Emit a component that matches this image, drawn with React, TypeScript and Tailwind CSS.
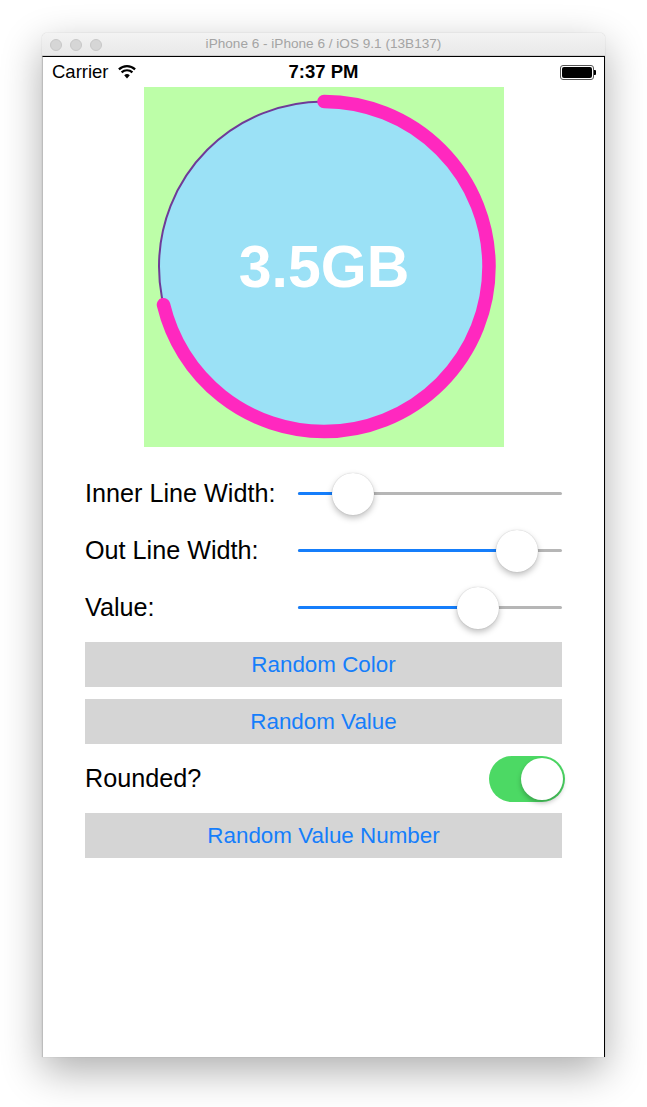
import React from "react";

const font = { fontFamily: '"Liberation Sans", Arial, sans-serif' };

function Slider({ pos }: { pos: number }) {
  return (
    <div className="relative h-full flex-1 flex items-center">
      <div className="relative w-full h-[3px] bg-[#b6b6b6] rounded-full">
        <div className="absolute left-0 top-0 h-[3px] bg-[#157efb] rounded-full" style={{ width: pos }} />
      </div>
      <div
        className="absolute top-1/2 w-[42px] h-[42px] -mt-[21px] rounded-full bg-white shadow-[0_3px_6px_rgba(0,0,0,0.25),0_0_1px_rgba(0,0,0,0.25)]"
        style={{ left: pos - 21 }}
      />
    </div>
  );
}

function Row({ label, pos }: { label: string; pos: number }) {
  return (
    <div className="flex items-center h-[45px]">
      <div className="w-[213px] text-[25.2px] text-black leading-none">{label}</div>
      <Slider pos={pos} />
    </div>
  );
}

function Btn({ children }: { children: React.ReactNode }) {
  return (
    <div className="h-[45px] bg-[#d5d5d5] flex items-center justify-center text-[#157efb] text-[22.4px]">
      {children}
    </div>
  );
}

export default function App() {
  const C = 2 * Math.PI * 165;
  const frac = 256.5 / 360;
  return (
    <div className="w-[647px] h-[1107px] bg-white relative overflow-hidden" style={font}>
      <div className="absolute left-[42px] top-[33px] w-[563px] h-[1024px] flex flex-col rounded-t-[5px] shadow-[0_14px_40px_rgba(0,0,0,0.32),0_0_1px_rgba(0,0,0,0.3)]">
        {/* title bar */}
        <div className="relative h-[23px] rounded-t-[5px] bg-gradient-to-b from-[#f3f3f3] to-[#e9e9e9] border-b border-[#cfcfcf] flex items-center justify-center">
          <div className="absolute left-[8px] top-[6px] flex gap-[8px]">
            <div className="w-[12px] h-[12px] rounded-full bg-[#d6d6d6] border border-[#c8c8c8]" />
            <div className="w-[12px] h-[12px] rounded-full bg-[#d6d6d6] border border-[#c8c8c8]" />
            <div className="w-[12px] h-[12px] rounded-full bg-[#d6d6d6] border border-[#c8c8c8]" />
          </div>
          <span className="text-[13.6px] text-[#a4a4a4] leading-none">iPhone 6 - iPhone 6 / iOS 9.1 (13B137)</span>
        </div>
        {/* screen */}
        <div className="flex-1 bg-white border-t border-black border-r border-r-black border-l border-l-[#bdbdbd] flex flex-col">
          {/* status bar */}
          <div className="relative h-[30px] flex items-center px-[9px]">
            <span className="text-[18.5px] text-black leading-none">Carrier</span>
            <svg className="ml-[9px]" width="18" height="14" viewBox="0 0 18 14">
              <path d="M9 13.5 L6.2 10.3 A4.2 4.2 0 0 1 11.8 10.3 Z" fill="black" />
              <path d="M3.6 7.4 A7.8 7.8 0 0 1 14.4 7.4" stroke="black" strokeWidth="2.2" fill="none" />
              <path d="M0.9 4.4 A11.8 11.8 0 0 1 17.1 4.4" stroke="black" strokeWidth="2.2" fill="none" />
            </svg>
            <span className="absolute left-1/2 -translate-x-1/2 text-[18.5px] font-bold text-black leading-none">7:37 PM</span>
            <div className="absolute right-[8px] top-[8px] flex items-center">
              <div className="w-[34px] h-[15px] rounded-[3px] border border-[#555] p-[1px]">
                <div className="w-full h-full bg-black rounded-[2px]" />
              </div>
              <div className="w-[2px] h-[5px] bg-black rounded-r-[1px]" />
            </div>
          </div>
          {/* chart */}
          <div className="mx-auto w-[360px] h-[360px] bg-[#bdfea8]">
            <svg width="360" height="360" viewBox="0 0 360 360">
              <circle cx="180" cy="179.5" r="165" fill="#9be1f6" />
              <circle cx="180" cy="179.5" r="165" fill="none" stroke="#6f3a98" strokeWidth="2" />
              <circle
                cx="180"
                cy="179.5"
                r="165"
                fill="none"
                stroke="#ff28bf"
                strokeWidth="13.5"
                strokeLinecap="round"
                strokeDasharray={`${C * frac} ${C}`}
                transform="rotate(-90 180 179.5)"
              />
              <text
                x="180"
                y="200"
                textAnchor="middle"
                fill="white"
                fontWeight="bold"
                fontSize="59"
                fontFamily='"Liberation Sans", Arial, sans-serif'
              >
                3.5GB
              </text>
            </svg>
          </div>
          {/* controls */}
          <div className="px-[42px] pt-[24px] flex flex-col gap-[12px]">
            <Row label="Inner Line Width:" pos={55} />
            <Row label="Out Line Width:" pos={219} />
            <Row label="Value:" pos={180} />
            <Btn>Random Color</Btn>
            <Btn>Random Value</Btn>
            <div className="flex items-center justify-between h-[45px]">
              <span className="text-[25.2px] text-black leading-none">Rounded?</span>
              <div className="relative w-[76px] h-[46px] -mr-[3px] rounded-full bg-[#4cd964]">
                <div className="absolute right-[2px] top-[2px] w-[42px] h-[42px] rounded-full bg-white shadow-[0_3px_5px_rgba(0,0,0,0.25)]" />
              </div>
            </div>
            <Btn>Random Value Number</Btn>
          </div>
        </div>
      </div>
    </div>
  );
}
